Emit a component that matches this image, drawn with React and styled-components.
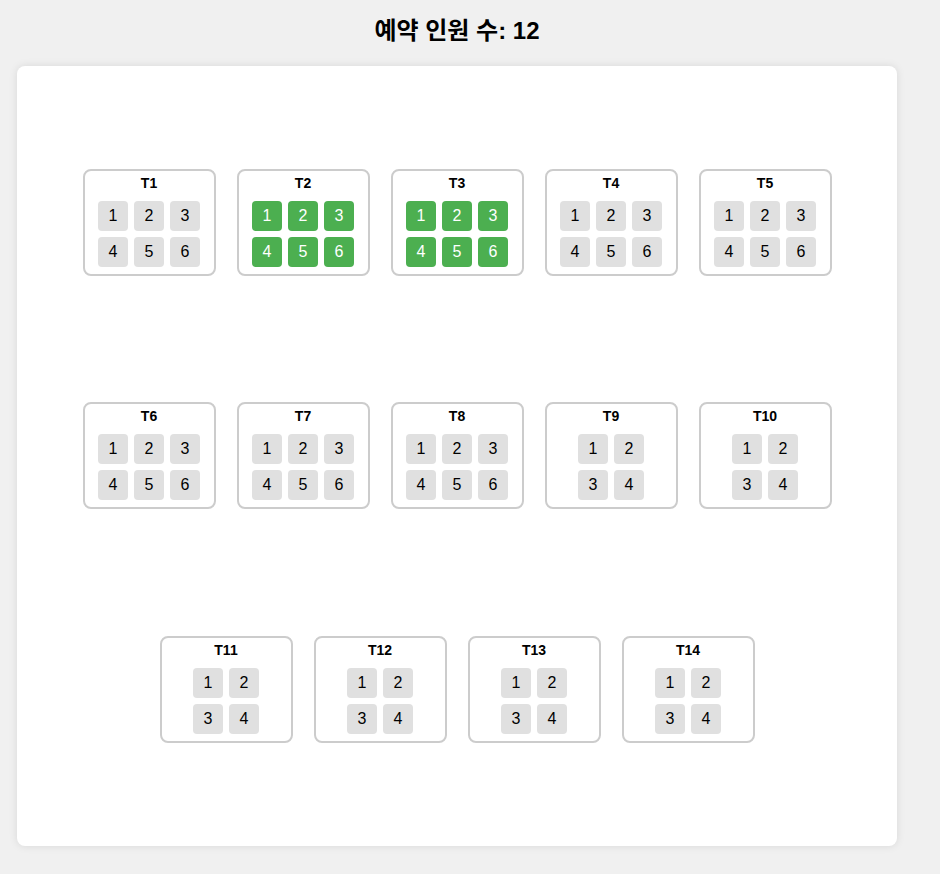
import React from 'react';
import styled, { createGlobalStyle } from 'styled-components';

const tables = [
	[
		{ name: 'T1', seats: 6 },
		{ name: 'T2', seats: 6, booked: true },
		{ name: 'T3', seats: 6, booked: true },
		{ name: 'T4', seats: 6 },
		{ name: 'T5', seats: 6 },
	],
	[
		{ name: 'T6', seats: 6 },
		{ name: 'T7', seats: 6 },
		{ name: 'T8', seats: 6 },
		{ name: 'T9', seats: 4 },
		{ name: 'T10', seats: 4 },
	],
	[
		{ name: 'T11', seats: 4 },
		{ name: 'T12', seats: 4 },
		{ name: 'T13', seats: 4 },
		{ name: 'T14', seats: 4 },
	],
];

export default function App() {
	const count = tables
		.flat()
		.filter(t => t.booked)
		.reduce((sum, t) => sum + t.seats, 0);

	return (
		<Wrapper>
			<GlobalStyle />
			<Title>예약 인원 수: {count}</Title>
			<Floor>
				{tables.map((row, i) => (
					<TableRow key={i}>
						{row.map(table => (
							<Table key={table.name}>
								<TableName>{table.name}</TableName>
								<SeatGrid cols={table.seats === 6 ? 3 : 2}>
									{Array.from({ length: table.seats }, (_, n) => (
										<Seat key={n} booked={table.booked}>
											{n + 1}
										</Seat>
									))}
								</SeatGrid>
							</Table>
						))}
					</TableRow>
				))}
			</Floor>
		</Wrapper>
	);
}

const GlobalStyle = createGlobalStyle`
	body {
		margin: 0;
		background: #f0f0f0;
		font-family: 'Liberation Sans', Arial, 'Noto Sans CJK KR', sans-serif;
	}
`;

const Wrapper = styled.div`
	width: 880px;
	padding: 0 17px 28px;
`;

const Title = styled.h2`
	margin: 0 0 20px;
	padding-top: 16px;
	text-align: center;
	font-size: 24px;
	line-height: 30px;
	font-weight: bold;
	color: #000;
`;

const Floor = styled.div`
	box-sizing: border-box;
	height: 780px;
	padding: 40px;
	background: #fff;
	border-radius: 8px;
	box-shadow: 0 0 8px rgba(0, 0, 0, 0.1);
	display: grid;
	grid-template-rows: repeat(3, 1fr);
`;

const TableRow = styled.div`
	display: flex;
	justify-content: center;
	align-items: center;
	gap: 21px;
`;

const Table = styled.div`
	box-sizing: border-box;
	width: 133px;
	padding: 4px 0 7px;
	border: 2px solid #ccc;
	border-radius: 8px;
	background: #fff;
	display: flex;
	flex-direction: column;
	align-items: center;
`;

const TableName = styled.div`
	font-size: 14px;
	font-weight: bold;
	line-height: 16px;
	margin-bottom: 10px;
`;

const SeatGrid = styled.div`
	display: grid;
	grid-template-columns: repeat(${p => p.cols}, 30px);
	gap: 6px;
`;

const Seat = styled.div`
	width: 30px;
	height: 30px;
	border-radius: 4px;
	display: flex;
	align-items: center;
	justify-content: center;
	font-size: 16px;
	background: ${p => (p.booked ? '#4caf50' : '#e0e0e0')};
	color: ${p => (p.booked ? '#fff' : '#000')};
`;
